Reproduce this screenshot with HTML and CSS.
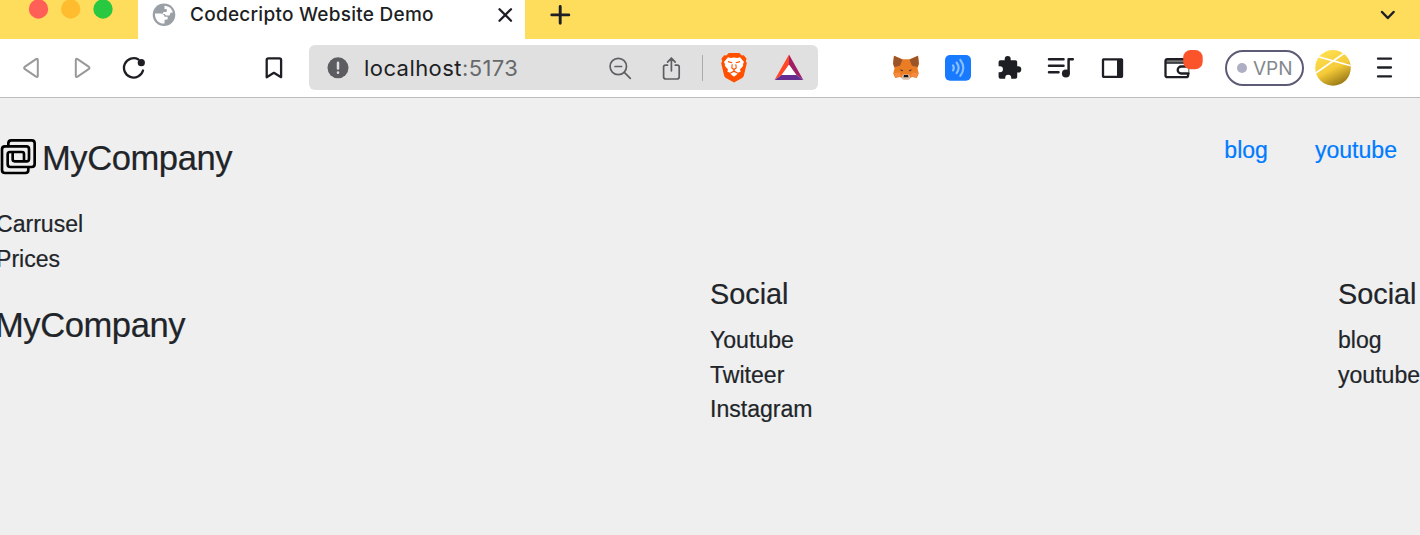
FILE: index.html
```html
<!DOCTYPE html>
<html lang="en">
<head>
<meta charset="utf-8">
<title>Codecripto Website Demo</title>
<link rel="stylesheet" href="styles.css">
</head>
<body>
<div class="tabstrip">
  <svg class="lights" width="138" height="39" viewBox="0 0 138 39"><circle cx="38.500" cy="9" r="9.700" fill="#ff5f57"/><circle cx="70.700" cy="9" r="9.700" fill="#febc2e"/><circle cx="103" cy="9" r="9.700" fill="#28c840"/></svg>
  <div class="tab">
    <svg class="globe" width="24" height="24" viewBox="152 3 24 24"><circle cx="164" cy="14.700" r="11.300" fill="#9aa0a6"/><path d="M164.500 5.800c4.500.3 7.500 3 8.300 6.700l-2.300.2-1 2.800h-3.500l-1.500-1.500h-2l1-2h3l.5-2.700-2.500-.3z" fill="#fff"/><path d="M155 13.500h5.500q3.500.2 4 3.200h3.200v2.500l-3.200.8v3.500c-5 .8-9.800-3.500-9.500-10z" fill="#fff"/></svg>
    <span class="tab-title">Codecripto Website Demo</span>
    <svg class="close" width="16" height="16" viewBox="497 7 16 16"><path d="M499.500 9.200l11.500 11.500m0-11.500l-11.500 11.500" class="ink"/></svg>
  </div>
  <svg class="plus" width="22" height="22" viewBox="549 4 22 22"><path d="M560.200 6.500v16.800M551.800 14.900h17" class="ink heavy"/></svg>
  <svg class="chevron" width="18" height="14" viewBox="1379 8 18 14"><path d="M1382 12l5.800 6 5.800-6" class="ink bold"/></svg>
</div>
<div class="toolbar">
  <svg width="18" height="46" viewBox="22 45 18 46"><path d="M37.800 60v15.700q0 2-1.800 1l-11-7.500q-1.700-1.300 0-2.600l11-7.500q1.800-1 1.800.9z" class="nav-arrow"/></svg>
  <svg class="forward" width="18" height="46" viewBox="74 45 18 46"><path d="M75.800 60v15.700q0 2 1.800 1l11-7.500q1.700-1.300 0-2.600l-11-7.500q-1.800-1-1.800.9z" class="nav-arrow"/></svg>
  <svg class="reload" width="24" height="46" viewBox="122 45 24 46"><path d="M138.500 59.400A9.700 9.700 0 1 0 143 70.500" class="ink"/><circle cx="141.300" cy="62.700" r="3.600" fill="#1d1f24"/></svg>
  <svg class="bookmark" width="20" height="46" viewBox="264 45 20 46"><path d="M266.700 60q0-1.700 1.700-1.700h11q1.700 0 1.700 1.700v17.200l-7.200-4.400-7.200 4.400z" class="ink"/></svg>
  <div class="address">
    <svg class="info" width="22" height="22" viewBox="327 57 22 22"><circle cx="338" cy="67.800" r="10.500" fill="#5b5d61"/><path d="M338 62.800v5.700m0 4v.3" class="info-mark"/></svg>
    <span class="url">localhost<span class="port">:5173</span></span>
    <svg class="search" width="24" height="46" viewBox="608 45 24 46"><circle cx="618.300" cy="66.500" r="8.200" class="thin"/><path d="M615 66.500h6.600M624.300 72.400l6 6" class="thin"/></svg>
    <svg class="share" width="20" height="46" viewBox="662 45 20 46"><path d="M667.500 65.200h-2q-1.900 0-1.900 1.900v9.600q0 2.300 2.300 2.300h11q2.300 0 2.300-2.300v-9.600q0-1.900-1.900-1.900h-2M671.400 70.800V58.200m-3.800 3.900l3.800-3.900 3.800 3.900" class="thin"/></svg>
    <span class="divider"></span>
    <svg class="brave" width="28" height="46" viewBox="720 45 28 46"><path d="M728.800 53h10.600l2.300 2.400 2.100-.1 2.800 3.500-.8 2.200 1 2.300-2.900 12.100q-.5 1.600-1.800 2.500l-8.100 4.500-8.100-4.500q-1.300-.9-1.800-2.500l-2.900-12.100 1-2.300-.8-2.200 2.800-3.500 2.100.1z" fill="#ff5000"/><path d="M734 57.500l3.200.4 2.800-.6 4 4.700-1 2 .2 1.800-3.200 3.700.7 2-2.700 1.200-4-2.400-4 2.400-2.700-1.200.7-2-3.200-3.700.2-1.800-1-2 4-4.700 2.800.6zM730.300 73.800l3.700-1.700 3.700 1.700-3.700 2.900z" fill="#fff"/><path d="M728 61.600l4.200 1.200m7.800-1.200l-4.200 1.200M732.200 64.300l-.4 3.700 2.200 1.500 2.200-1.500-.4-3.700M734 69.500v2" class="mane"/></svg>
    <svg class="bat" width="30" height="46" viewBox="774 45 30 46"><path d="M789 54.500L774.600 80h28.800z" fill="#fff"/><path d="M789 54.500v10L781.500 75l-7 5z" fill="#ff4724"/><path d="M789 54.500l14.400 25.500-6.900-5-7.500-10.500z" fill="#9e1f63"/><path d="M774.600 80l6.900-5h15l6.900 5z" fill="#662d91"/></svg>
  </div>
  <svg class="fox" width="29" height="46" viewBox="892 45 29 46"><path d="M894 55.700l8.500 3.600h7l8.500-3.600 1 8-1.500 4.800 1.300 5-2 4.500-4.800-1-3.300 2.200h-5.400l-3.300-2.200-4.800 1-2-4.500 1.300-5-1.500-4.800z" fill="#ea7c24"/><path d="M894 55.700l8.500 4-2.500 6-5.500 1.300-1.300-3.300zM918 55.700l-8.500 4 2.500 6 5.500 1.300 1.300-3.300z" fill="#9b5428"/><path d="M894 73l5.500-.5 2 4-6 1zM918 73l-5.500-.5-2 4 6 1z" fill="#f58b42"/><path d="M899.500 69.600l3.500.5-.7 1.500zM912.500 69.600l-3.500.5.700 1.500z" fill="#413039"/><path d="M903 74.500h6l1.500 3-1.700 2.300h-5.600l-1.700-2.300z" fill="#d8c4b4"/><path d="M904 75h4l.5 2.300h-5z" fill="#16161b"/></svg>
  <svg class="wave" width="26" height="46" viewBox="945 45 26 46"><rect x="945" y="55" width="26" height="25.700" rx="5" fill="#187bff"/><path d="M953 65.300q1.700 2.500 0 5M956.600 62.500q4 5.300 0 10.700M960.300 59.800q6 8 0 16" class="signal"/></svg>
  <svg class="puzzle" width="26" height="46" viewBox="997 45 26 46"><path d="M1000.200 60.200h4.500v-1.100a3 3 0 0 1 6 0v1.100h4.700q1.800 0 1.800 1.800v4.300h1a3.100 3.100 0 0 1 0 6.200h-1v4.400q0 1.800-1.800 1.800h-4.200v-1a3 3 0 0 0-6 0v1h-4.800q-1.800 0-1.800-1.800v-4.600h1.300a3 3 0 0 0 0-6.100h-1.300V62q0-1.800 1.600-1.800z" fill="#1d1f24"/></svg>
  <svg class="music" width="28" height="46" viewBox="1047 45 28 46"><path d="M1049 59.300h14.500m-14.500 6.500h14.500m-14.500 6.500h9.500M1068.600 72.500V59.300h4.200" class="ink bold"/><circle cx="1065.900" cy="73.500" r="4" fill="#1d1f24"/></svg>
  <svg class="panel" width="24" height="46" viewBox="1101 45 24 46"><rect x="1103" y="59.300" width="19" height="17.500" rx=".5" class="ink"/><path d="M1117 59h6v18h-6z" fill="#1d1f24"/></svg>
  <svg class="wallet" width="41" height="46" viewBox="1163 45 41 46"><path d="M1166 59.500h22v3.200h-22z" fill="#777"/><rect x="1165.500" y="59.200" width="22.600" height="18" rx="2" class="ink"/><path d="M1166 63h22" class="ink fine"/><path d="M1188.500 66.500h-7.300a3.500 3.500 0 0 0 0 7h7.300" class="ink" fill="#fff"/><rect x="1183.200" y="50" width="19.500" height="19.300" rx="7.500" fill="#fb542b"/></svg>
  <div class="vpn"><span class="dot"></span><span class="vpn-label">VPN</span></div>
  <svg class="avatar" width="36" height="46" viewBox="1315 45 36 46"><defs><linearGradient id="gold" x1=".3" y1="0" x2=".8" y2="1"><stop offset="0" stop-color="#ffdf50"/><stop offset=".5" stop-color="#f5cb38"/><stop offset="1" stop-color="#8c6c10"/></linearGradient><clipPath id="disc"><circle cx="1333" cy="67.900" r="17.800"/></clipPath></defs><circle cx="1333" cy="67.900" r="17.800" fill="url(#gold)"/><path clip-path="url(#disc)" d="M1315 55.800l36 10M1315 73.500l31-21.500" stroke="#fff" stroke-width="1.700"/></svg>
  <svg class="menu" width="17" height="46" viewBox="1376 45 17 46"><path d="M1378 58.700h13M1378 67.500h13M1378 76.400h13" class="ink"/></svg>
</div>
<main class="page">
  <header class="site-header">
    <div class="brand">
      <svg width="37" height="37" viewBox="0 54 111 111"><g class="logo"><path d="M25 77V70q0-9 9-9H95q9 0 9 9V132q0 9-9 9H31q-8 0-8-8V103q0-7 7-7H66q6 0 6 6V123"/><path d="M85 143v7q0 9-9 9H15q-9 0-9-9V88q0-9 9-9H79q8 0 8 8v30q0 7-7 7H44q-6 0-6-6V97"/></g></svg>
      <h1>MyCompany</h1>
    </div>
    <nav><a>blog</a><a>youtube</a></nav>
  </header>
  <section class="sections"><div>Carrusel</div><div>Prices</div></section>
  <footer>
    <h2>MyCompany</h2>
    <div class="column"><h3>Social</h3><div>Youtube</div><div>Twiteer</div><div>Instagram</div></div>
    <div class="column"><h3>Social</h3><div>blog</div><div>youtube</div></div>
  </footer>
</main>
</body>
</html>
```
FILE: styles.css
```css
* { box-sizing: border-box; }
body { margin: 0; height: 535px; overflow: hidden; background: #efefef; color: #212529; font: 23.07px/34.6px "Liberation Sans", Arial, sans-serif; }
svg { display: block; flex: none; fill: none; }
h1, h2, h3 { margin: 0; font-weight: 400; }

.tabstrip { display: flex; height: 39px; background: #ffdd5c; }
.tab { display: flex; width: 387px; padding-left: 14px; background: #fff; }
.globe { margin-top: 3px; }
.tab-title { width: 307px; margin-left: 14px; font: 500 19px/30px Inter, sans-serif; letter-spacing: .25px; color: #1d1f24; white-space: nowrap; }
.close { margin-top: 7px; }
.plus { margin: 4px 0 0 24px; }
.chevron { margin: 8px 23px 0 auto; }

.ink { stroke: #1d1f24; stroke-width: 2.3; stroke-linecap: round; stroke-linejoin: round; }
.bold { stroke-width: 2.5; }
.heavy { stroke-width: 2.9; }
.fine { stroke-width: 1.3; }
.thin { stroke: #5d5f62; stroke-width: 1.7; stroke-linecap: round; stroke-linejoin: round; }
.nav-arrow { stroke: #999; stroke-width: 2; }
.info-mark { stroke: #e0e0e0; stroke-width: 2.5; stroke-linecap: round; }
.mane { stroke: #ff5000; stroke-width: 1.1; }
.signal { stroke: #8cbfff; stroke-width: 2.1; stroke-linecap: round; }

.toolbar { display: flex; align-items: center; height: 59px; padding-left: 22px; background: #fff; border-bottom: 1px solid #bdbdbd; }
.forward { margin-left: 34px; }
.reload { margin-left: 30px; }
.bookmark { margin-left: 118px; }
.address { display: flex; align-items: center; width: 509px; height: 45px; margin: 0 0 1px 25px; padding-left: 18px; background: #e0e0e0; border-radius: 6px; }
.url { width: 244px; margin-left: 15px; font: 22px/30px Inter, sans-serif; letter-spacing: .43px; color: #1d1f24; white-space: nowrap; }
.port { color: #67696c; }
.share { margin-left: 30px; }
.divider { width: 1px; height: 26px; margin-left: 20px; background: #aaa; }
.brave { margin-left: 17px; }
.bat { margin-left: 26px; }
.fox { margin-left: 74px; }
.wave { margin-left: 24px; }
.puzzle { margin-left: 26px; }
.music { margin-left: 24px; }
.panel { margin-left: 26px; }
.wallet { margin-left: 38px; }
.vpn { display: flex; align-items: center; width: 79px; height: 36px; margin-left: 21px; padding-left: 10px; gap: 6px; border: 2px solid #5c5b75; border-radius: 18px; font: 19px/30px Inter, sans-serif; color: #84888f; }
.vpn-label { padding-top: 1px; }
.dot { width: 10px; height: 10px; border-radius: 50%; background: #aeaec5; }
.avatar { margin-left: 11px; }
.menu { margin-left: 25px; }

.page { padding-top: 34px; -webkit-text-stroke: .2px; }
.site-header { display: flex; justify-content: space-between; height: 75px; padding-right: 23px; }
.brand { display: flex; gap: 5px; padding-top: 6px; }
.brand h1, footer h2 { font-size: 34.6px; line-height: 41.5px; letter-spacing: -.45px; }
nav { display: flex; gap: 47px; padding-top: 1px; color: #007bff; }
.sections { margin-left: -4px; }
.logo { stroke: #000; stroke-width: 8; }
footer { display: grid; grid-template-columns: 715px 628px 90px; margin-left: -5px; padding-top: 1px; }
footer h2 { padding-top: 28px; }
.column h3 { margin-bottom: 11.5px; font-size: 28.84px; line-height: 34.6px; }
```
